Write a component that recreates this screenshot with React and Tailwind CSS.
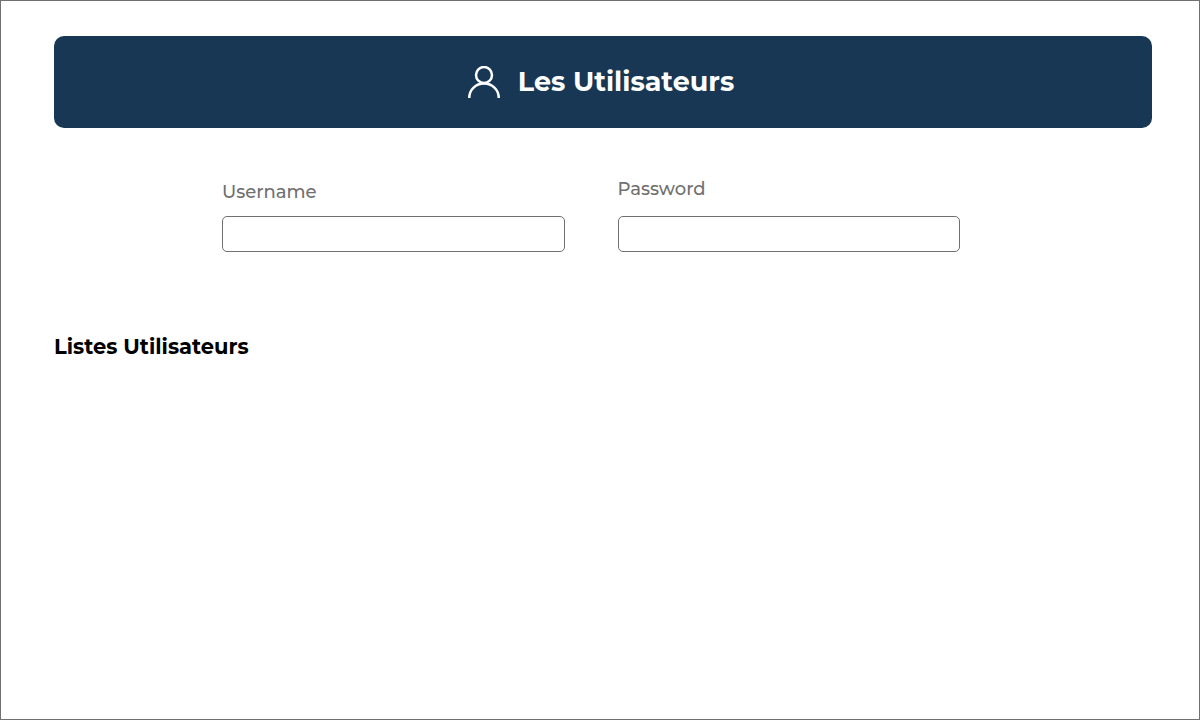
import React from "react";

function UserIcon() {
  return (
    <svg className="size-8 shrink-0" viewBox="0 0 32 32" fill="none" stroke="currentColor" strokeWidth="2.5" aria-hidden="true">
      <circle cx="16" cy="9" r="8" />
      <path d="M1.25 32C1.25 23.6 7.9 17.6 16 17.6S30.75 23.6 30.75 32" />
    </svg>
  );
}

function Field({ id, label, type, labelGap }) {
  return (
    <div className="flex flex-1 flex-col justify-end">
      <label htmlFor={id} className={`${labelGap} self-start text-lg leading-6 font-medium text-[#707070]`}>
        {label}
      </label>
      <input
        id={id}
        type={type}
        className="h-9 w-full rounded-[5px] border border-[#707070] bg-white px-3 text-base"
      />
    </div>
  );
}

export default function App() {
  return (
    <main className="min-h-screen border border-[#707070] bg-white pt-[35px] pr-[47px] pl-[53px] font-['Montserrat','Open_Sans',sans-serif]">
      <header className="flex h-[92px] items-center justify-center gap-[18px] rounded-[10px] bg-[#173755] pr-1 text-white">
        <UserIcon />
        <h1 className="text-[27px] leading-9 font-bold">Les Utilisateurs</h1>
      </header>
      <form className="mt-[49px] flex items-end gap-[53px] pr-48 pl-[168px]">
        <Field id="username" label="Username" type="text" labelGap="mb-3" />
        <Field id="password" label="Password" type="password" labelGap="mb-[15px]" />
      </form>
      <h2 className="mt-[81px] text-[21px] leading-7 font-bold text-black">Listes Utilisateurs</h2>
    </main>
  );
}
